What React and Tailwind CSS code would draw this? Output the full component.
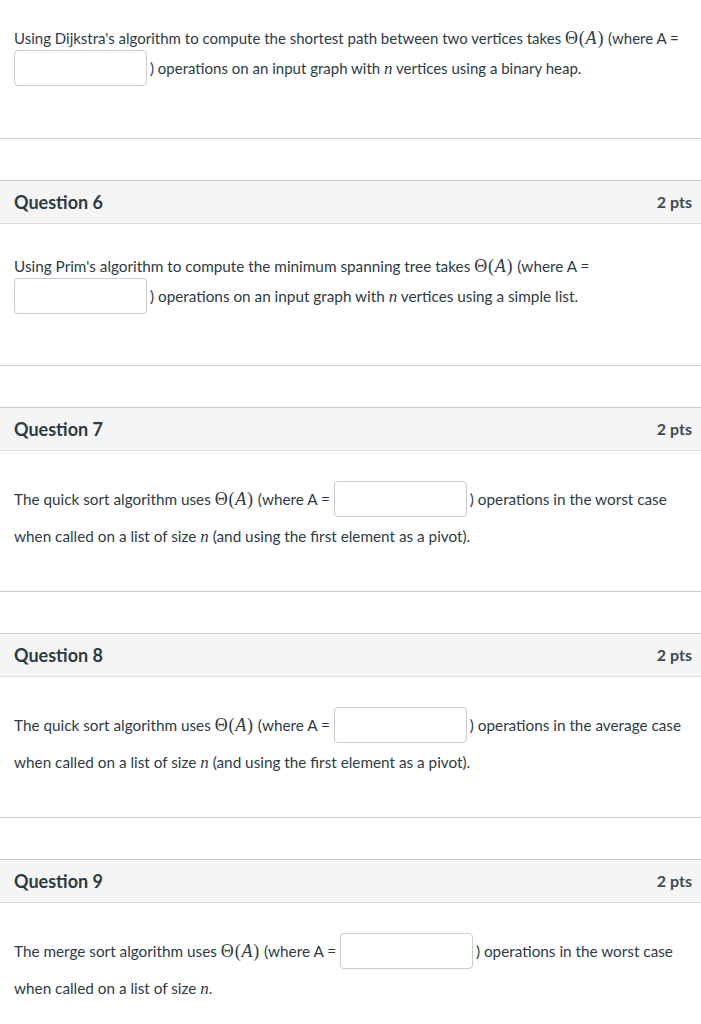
import React from "react";

const Theta = () => (
  <span className="font-['Liberation_Serif',serif] text-[18px] tracking-[0.8px]">
    Θ(<i>A</i>)
  </span>
);

const N = () => <i className="font-['Liberation_Serif',serif] text-[17px]">n</i>;

const Blank = () => (
  <input
    type="text"
    readOnly
    className="inline-block w-[133px] h-[36px] mr-[3px] mb-[7px] align-baseline bg-white border border-[#c7cdd1] rounded-[4px] px-2 text-[15px]"
  />
);

const Header = ({ num, pts }) => (
  <div className="flex items-center justify-between h-[44px] pl-[14px] pr-[9px] bg-[#f5f5f5] border-t border-[#c7cdd1] border-b border-b-[#dcdfe1]">
    <span className="text-[18px] font-bold text-[#2d3b45]">Question {num}</span>
    <span className="text-[16px] font-bold text-[#3d4a54]">{pts} pts</span>
  </div>
);

const Question = ({ num, children, pb = "pb-[42px]" }) => (
  <div className="mt-[41px] border-b border-[#c7cdd1]">
    <Header num={num} pts={2} />
    <div className={`pt-[30px] ${pb} px-[14px] leading-[24px]`}>{children}</div>
  </div>
);

export default function App() {
  return (
    <div className="w-[701px] bg-white text-[15.3px] text-[#2d3b45] font-['Lato','Liberation_Sans',sans-serif]">
      {/* tail of question 5 */}
      <div className="border-b border-[#c7cdd1]">
        <div className="pt-[26px] pb-[45px] px-[14px] leading-[24px] text-[15px]">
          <span className="whitespace-nowrap">
            Using Dijkstra's algorithm to compute the shortest path between two vertices takes <Theta /> (where A =
          </span>
          <br />
          <Blank />) operations on an input graph with <N /> vertices using a binary heap.
        </div>
      </div>

      <Question num={6} pb="pb-[44px]">
        Using Prim's algorithm to compute the minimum spanning tree takes <Theta /> (where A ={" "}
        <br />
        <Blank />) operations on an input graph with <N /> vertices using a simple list.
      </Question>

      <Question num={7}>
        The quick sort algorithm uses <Theta /> (where A = <Blank />) operations in the worst case
        <br />
        when called on a list of size <N /> (and using the first element as a pivot).
      </Question>

      <Question num={8}>
        The quick sort algorithm uses <Theta /> (where A = <Blank />) operations in the average case
        <br />
        when called on a list of size <N /> (and using the first element as a pivot).
      </Question>

      <Question num={9}>
        The merge sort algorithm uses <Theta /> (where A = <Blank />) operations in the worst case
        <br />
        when called on a list of size <N />.
      </Question>
    </div>
  );
}
